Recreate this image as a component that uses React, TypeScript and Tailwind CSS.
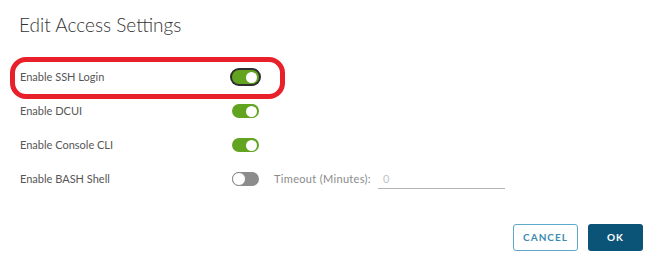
type Setting = {
  label: string;
  enabled: boolean;
  focused?: boolean;
  timeout?: boolean;
};

const settings: Setting[] = [
  { label: "Enable SSH Login", enabled: true, focused: true },
  { label: "Enable DCUI", enabled: true },
  { label: "Enable Console CLI", enabled: true },
  { label: "Enable BASH Shell", enabled: false, timeout: true },
];

function Toggle({ on, focused }: { on: boolean; focused?: boolean }) {
  return (
    <span
      className={`flex h-[14px] w-[27px] items-center rounded-full px-[2px] ${
        on ? "justify-end bg-[#62a420]" : "justify-start bg-[#8c8c8c]"
      } ${focused ? "ring-2 ring-[#2e2e2e]" : ""}`}
    >
      <span
        className={`rounded-full bg-white ${
          on ? "h-[11px] w-[11px]" : "-ml-[2px] h-[14px] w-[14px] border border-[#8c8c8c]"
        }`}
      />
    </span>
  );
}

export default function App() {
  return (
    <div
      className="relative h-[258px] w-[645px] overflow-hidden bg-white"
      style={{ fontFamily: "Lato, 'Open Sans', Arial, sans-serif" }}
    >
      <div className="px-[19px] pt-[12px]">
        <h1 className="text-[19px] font-light leading-[26px] text-[#333333]">
          Edit Access Settings
        </h1>

        <div className="mt-[22px] flex flex-col">
          {settings.map((s) => (
            <div key={s.label} className="flex h-[34px] items-center">
              <span className="w-[213px] pl-[1px] text-[11px] text-[#565656]">
                {s.label}
              </span>
              <Toggle on={s.enabled} focused={s.focused} />
              {s.timeout && (
                <div className="ml-[15px] flex items-center">
                  <span className="w-[104px] text-[11px] tracking-[0.03em] text-[#8a8a8a]">
                    Timeout (Minutes):
                  </span>
                  <div className="flex h-[20px] w-[127px] items-center border-b border-[#b3b3b3] pl-[5px] pt-[1px] text-[11px] text-[#c2c2c2]">
                    0
                  </div>
                </div>
              )}
            </div>
          ))}
        </div>
      </div>

      <div className="absolute left-[10px] top-[57px] h-[42px] w-[275px] rounded-[16px] border-[5px] border-[#e8202a]" />

      <div className="mt-[28px] flex justify-end gap-[10px] pr-[2px]">
        <button
          type="button"
          className="h-[27px] w-[65px] rounded-[3px] border border-[#5ea9c9] bg-white text-[10px] font-bold tracking-[0.1em] text-[#3d8bb0]"
        >
          CANCEL
        </button>
        <button
          type="button"
          className="h-[27px] w-[55px] rounded-[3px] bg-[#0b5477] text-[10px] font-bold tracking-[0.1em] text-white"
        >
          OK
        </button>
      </div>
    </div>
  );
}
